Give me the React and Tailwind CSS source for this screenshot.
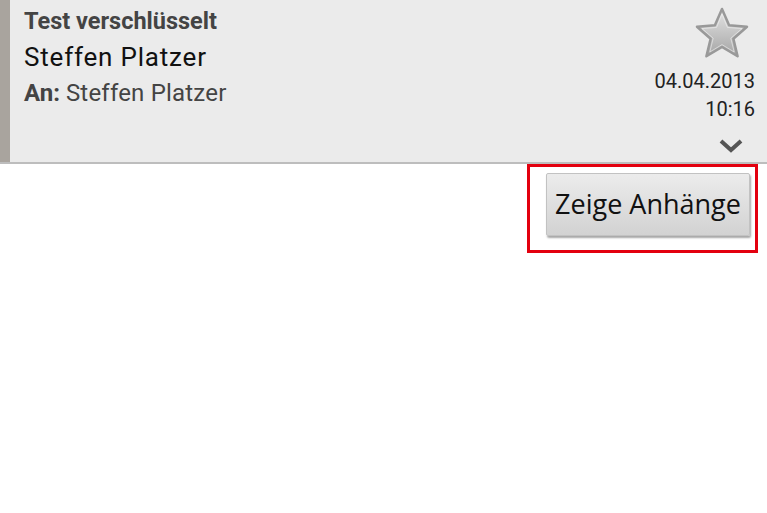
export default function App() {
  return (
    <div className="w-[767px] h-[513px] bg-white overflow-hidden" style={{ fontFamily: "Roboto, 'Noto Sans', sans-serif" }}>
      <div className="flex h-[164px] bg-[#ebebeb] border-b-2 border-[#bdbdbd]">
        <div className="w-[10px] bg-[#a9a49e]" />
        <div className="flex-1 pl-[14px] pt-[9px]">
          <div className="text-[23.5px] leading-[24px] font-bold text-[#444]">Test verschlüsselt</div>
          <div className="text-[26px] leading-[32px] tracking-[0.8px] text-[#111] mt-[8px]">Steffen Platzer</div>
          <div className="text-[24px] leading-[28px] text-[#444] mt-[6px]">
            <span className="font-bold">An:</span> <span className="tracking-[0.2px]">Steffen Platzer</span>
          </div>
        </div>
        <div className="flex flex-col items-end pr-[12px] pt-[6px]">
          <svg width="56" height="54" viewBox="0 0 56 54" className="mr-[5px]">
            <defs>
              <linearGradient id="sg" x1="0" y1="0" x2="0" y2="1">
                <stop offset="0" stopColor="#e4e4e4" />
                <stop offset="1" stopColor="#a5a5a5" />
              </linearGradient>
            </defs>
            <path
              d="M28 3 L35.1 19.3 L53 20.7 L39.4 32.7 L43.6 50.3 L28 41 L12.4 50.3 L16.6 32.7 L3 20.7 L20.9 19.3 Z"
              fill="url(#sg)"
              stroke="#999"
              strokeWidth="2.5"
              strokeLinejoin="round"
            />
            <path
              d="M28 8 L33.4 21.4 L48 22.6 L36.8 32.2 L40.2 46 L28 38.6 L15.8 46 L19.2 32.2 L8 22.6 L22.6 21.4 Z"
              fill="none"
              stroke="#f2f2f2"
              strokeOpacity="0.6"
              strokeWidth="1"
              strokeLinejoin="round"
            />
          </svg>
          <div className="text-[20px] leading-[28px] text-[#222] mt-[7px]">04.04.2013</div>
          <div className="text-[20px] leading-[28px] text-[#222]">10:16</div>
          <svg width="24" height="14" viewBox="0 0 24 14" className="mt-[16px] mr-[12px]">
            <path d="M2 2 L12 11 L22 2" fill="none" stroke="#555" strokeWidth="4" />
          </svg>
        </div>
      </div>
      <div className="flex justify-end pr-[9px]">
        <div className="w-[231px] h-[89px] border-[3px] border-[#e3000f] pl-[16px] pt-[6px] pr-[5px]">
          <div className="h-[63px] w-[204px] rounded-[2px] border border-[#c2c2c2] bg-gradient-to-b from-[#ececec] to-[#d2d2d2] shadow-[1px_2px_2px_rgba(0,0,0,0.35)] flex items-center justify-center">
            <span className="text-[27px] text-[#111]" style={{ fontFamily: "'Open Sans', Roboto, sans-serif" }}>Zeige Anhänge</span>
          </div>
        </div>
      </div>
    </div>
  );
}
